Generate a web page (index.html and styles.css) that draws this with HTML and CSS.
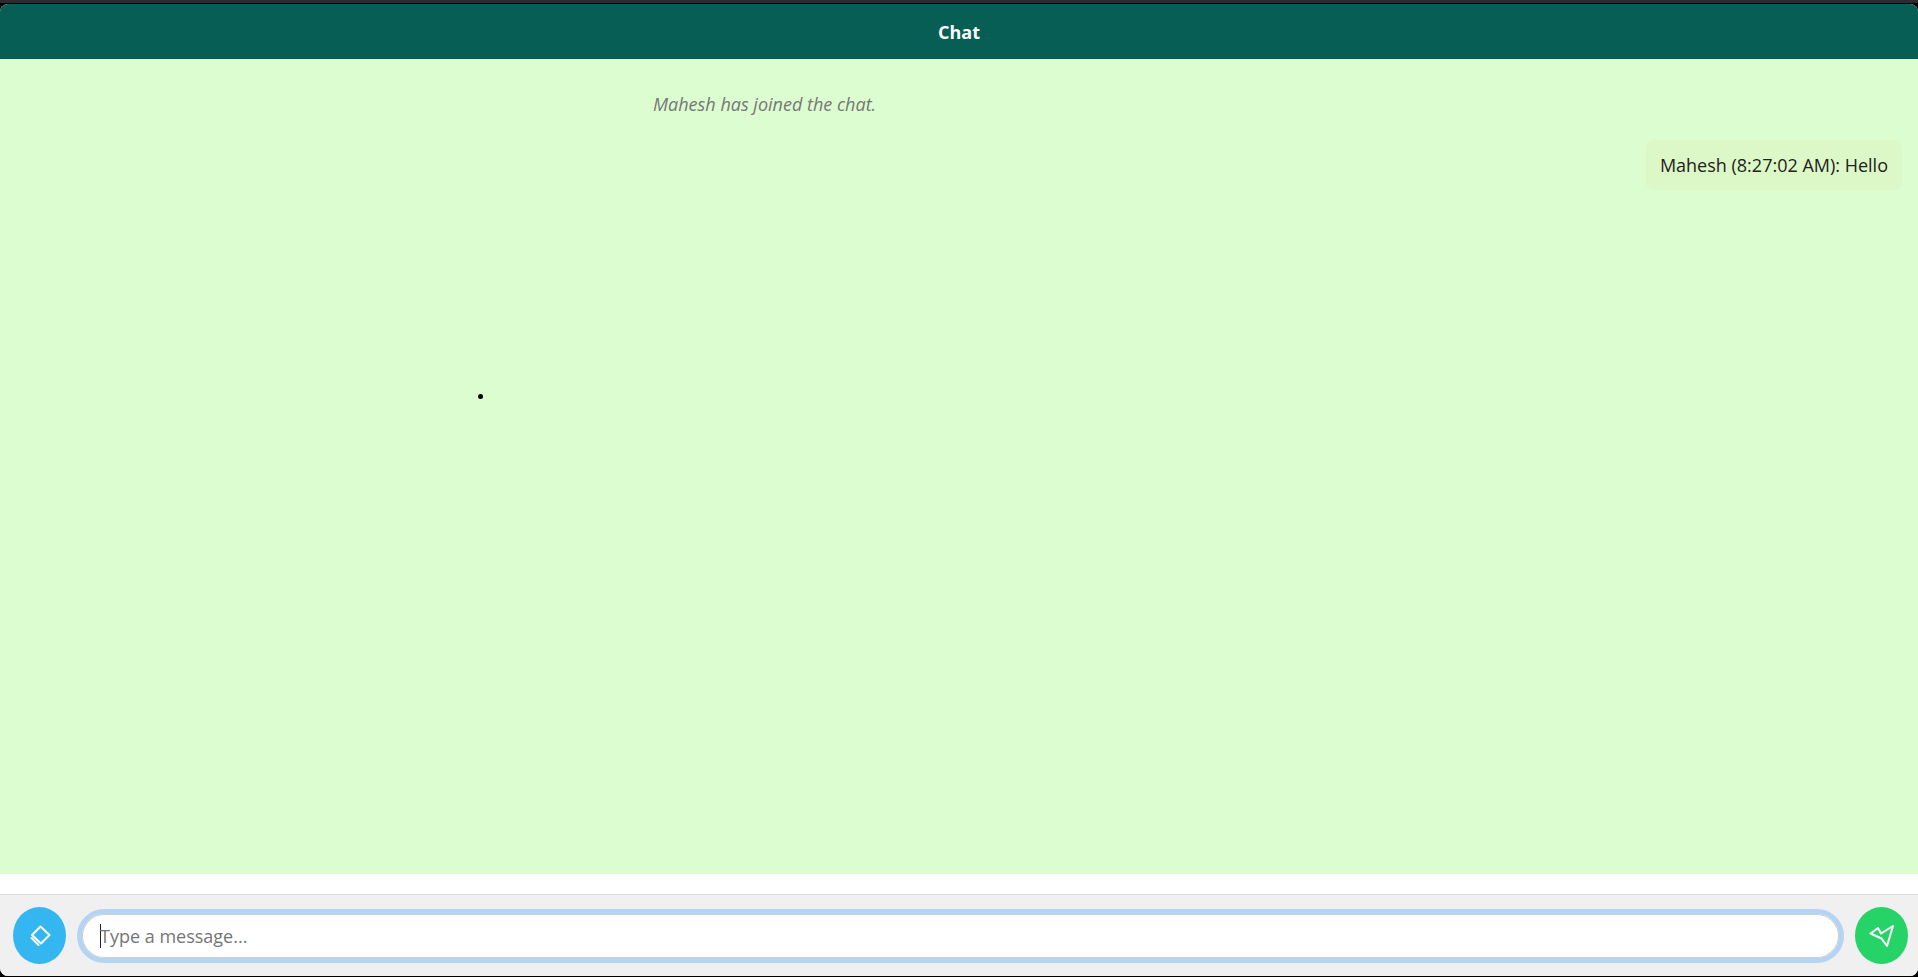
FILE: index.html
```html
<!DOCTYPE html>
<html lang="en">
<head>
<meta charset="utf-8">
<title>Chat</title>
<link rel="stylesheet" href="styles.css">
</head>
<body>
<div class="chrome"></div>
<main class="app">
  <header class="app-header">Chat</header>
  <section class="messages">
    <p class="notice">Mahesh has joined the chat.</p>
    <div class="bubble-row"><div class="bubble">Mahesh (8:27:02 AM): Hello</div></div>
    <span class="dot"></span>
  </section>
  <div class="spacer"></div>
  <form class="composer">
    <button type="button" class="round attach" aria-label="Attach">
      <svg width="26" height="26" viewBox="0 0 26 26" fill="none" stroke="#fff" stroke-width="2" stroke-linejoin="round" stroke-linecap="round"><path d="M13.5 3.5 22.5 12 14 20.5 5 12Z"/><path d="M4.5 15 10 20.5 11.5 22"/></svg>
    </button>
    <div class="field"><span class="caret"></span><span class="placeholder">Type a message...</span></div>
    <button type="button" class="round send" aria-label="Send">
      <svg width="32" height="32" viewBox="0 0 32 32" fill="none" stroke="#fff" stroke-width="2" stroke-linejoin="round" stroke-linecap="round"><path d="M27 6 21 26 15.500 18.500 4.500 13.500 12 8 15 13.500 Z"/></svg>
    </button>
  </form>
</main>
</body>
</html>
```
FILE: styles.css
```css
* { box-sizing: border-box; }
html, body { height: 100%; margin: 0; }
body {
  display: flex;
  flex-direction: column;
  background: #000;
  font-family: "Open Sans", "Noto Sans", sans-serif;
  overflow: hidden;
}
.chrome { height: 3px; background: #2b2b30; flex: none; }
.app {
  flex: 1;
  margin-top: 1px;
  margin-bottom: 1px;
  display: flex;
  flex-direction: column;
  background: #fff;
  border-radius: 8px;
  overflow: hidden;
}
.app-header {
  height: 55px;
  flex: none;
  background: #075e54;
  color: #fff;
  font-size: 18px;
  font-weight: 700;
  display: flex;
  align-items: center;
  justify-content: center;
}
.messages {
  position: relative;
  height: 815px;
  flex: none;
  background: #dcfdd0;
  padding: 0 16px;
}
.notice {
  margin: 0;
  padding-top: 32px;
  padding-left: 637px;
  font-size: 18px;
  line-height: 26px;
  font-style: italic;
  color: #777;
}
.bubble-row { display: flex; justify-content: flex-end; margin-top: 23px; }
.bubble {
  height: 50px;
  padding: 0 14px;
  background: #dcf8c6;
  border-radius: 8px;
  font-size: 18px;
  line-height: 50px;
  color: #222;
}
.dot {
  position: absolute;
  left: 478px;
  top: 335px;
  width: 5px;
  height: 5px;
  border-radius: 50%;
  background: #000;
}
.spacer { height: 20px; flex: none; background: #fff; }
.composer {
  flex: 1;
  display: flex;
  align-items: center;
  gap: 11px;
  padding: 0 10px 0 13px;
  background: #f0f0f0;
  border-top: 1px solid #ddd;
}
.round {
  width: 53px;
  height: 57px;
  flex: none;
  border: 0;
  border-radius: 50%;
  padding: 0;
  display: flex;
  align-items: center;
  justify-content: center;
}
.attach { background: #34b7f1; }
.send { background: #25d366; }
.field {
  flex: 1;
  height: 54px;
  border: 5px solid #b5d3f3;
  border-radius: 27px;
  background: #fff;
  box-shadow: inset 0 0 0 1px #ccc;
  display: flex;
  align-items: center;
  padding-left: 18px;
  font-size: 18px;
  color: #757575;
}
.caret { width: 1px; height: 24px; background: #222; margin-right: -1px; }
```
